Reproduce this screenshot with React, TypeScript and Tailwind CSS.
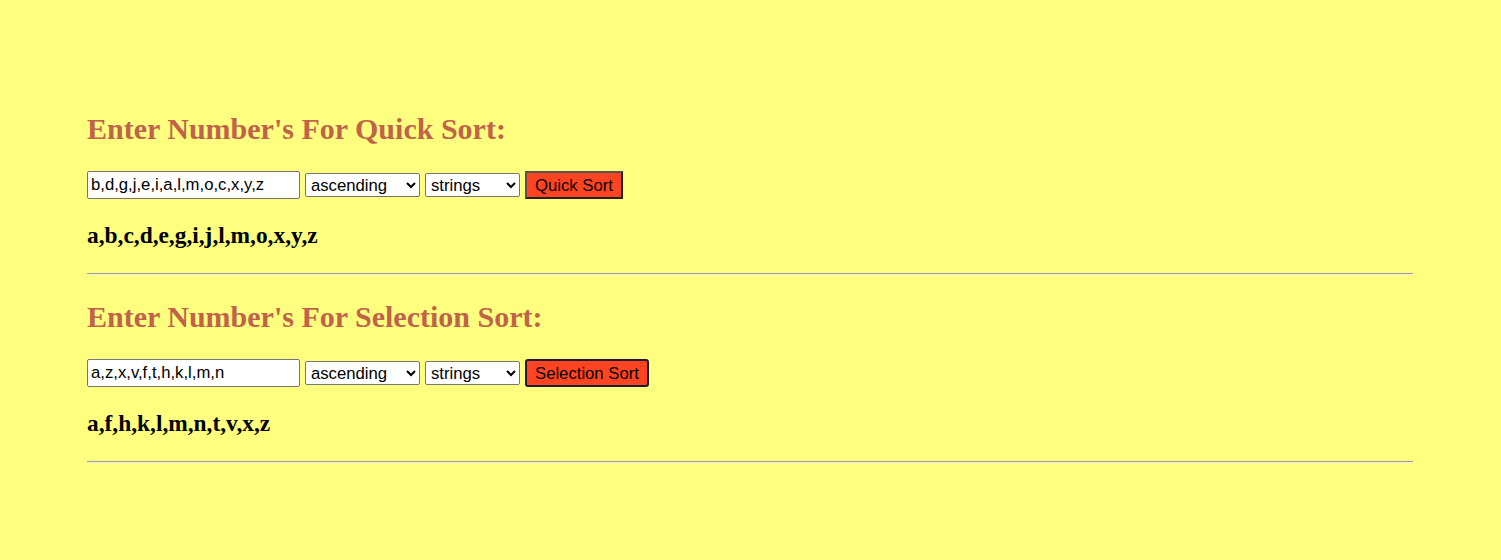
import { useState } from "react";

const SortBlock = ({
  title,
  value,
  result,
  button,
  focused,
}: {
  title: string;
  value: string;
  result: string;
  button: string;
  focused?: boolean;
}) => {
  const [text, setText] = useState(value);
  return (
    <div>
      <h2 className="font-['Liberation_Serif',serif] text-[30px] leading-[34px] font-bold text-[#c0634a]">
        {title}
      </h2>
      <div className="mt-[25px] flex items-center gap-[5px] font-['Liberation_Sans',Arial,sans-serif] text-[16.7px]">
        <input
          value={text}
          onChange={(e) => setText(e.target.value)}
          className="h-[28px] w-[213px] border border-[#767676] bg-white px-[3px] text-black rounded-[2px]"
        />
        <select className="h-[24px] w-[115px] border border-[#767676] bg-white pl-[1px] text-black rounded-[2px]">
          <option>ascending</option>
          <option>descending</option>
        </select>
        <select className="h-[24px] w-[95px] border border-[#767676] bg-white pl-[1px] text-black rounded-[2px]">
          <option>strings</option>
          <option>numbers</option>
        </select>
        <button
          className={
            focused
              ? "h-[28px] border-2 border-[#1a1a3a] bg-[#ff4422] px-[8px] text-black rounded-[3px]"
              : "h-[28px] border-2 border-t-[#555] border-l-[#555] border-r-[#222] border-b-[#222] bg-[#ff4422] px-[8px] text-black"
          }
        >
          {button}
        </button>
      </div>
      <h3 className="mt-[23px] font-['Liberation_Serif',serif] text-[23.4px] leading-[26px] font-bold text-black">
        {result}
      </h3>
      <hr className="mt-[25px] border-t border-t-[#9a9a9a] border-b border-b-[#eeeeee]" />
    </div>
  );
};

export default function App() {
  return (
    <div className="min-h-[560px] w-full bg-[#ffff7f] pt-[112px]">
      <div className="ml-[87px] w-[1326px] flex flex-col gap-[25px]">
        <SortBlock
          title="Enter Number's For Quick Sort:"
          value="b,d,g,j,e,i,a,l,m,o,c,x,y,z"
          result="a,b,c,d,e,g,i,j,l,m,o,x,y,z"
          button="Quick Sort"
        />
        <SortBlock
          title="Enter Number's For Selection Sort:"
          value="a,z,x,v,f,t,h,k,l,m,n"
          result="a,f,h,k,l,m,n,t,v,x,z"
          button="Selection Sort"
          focused
        />
      </div>
    </div>
  );
}
